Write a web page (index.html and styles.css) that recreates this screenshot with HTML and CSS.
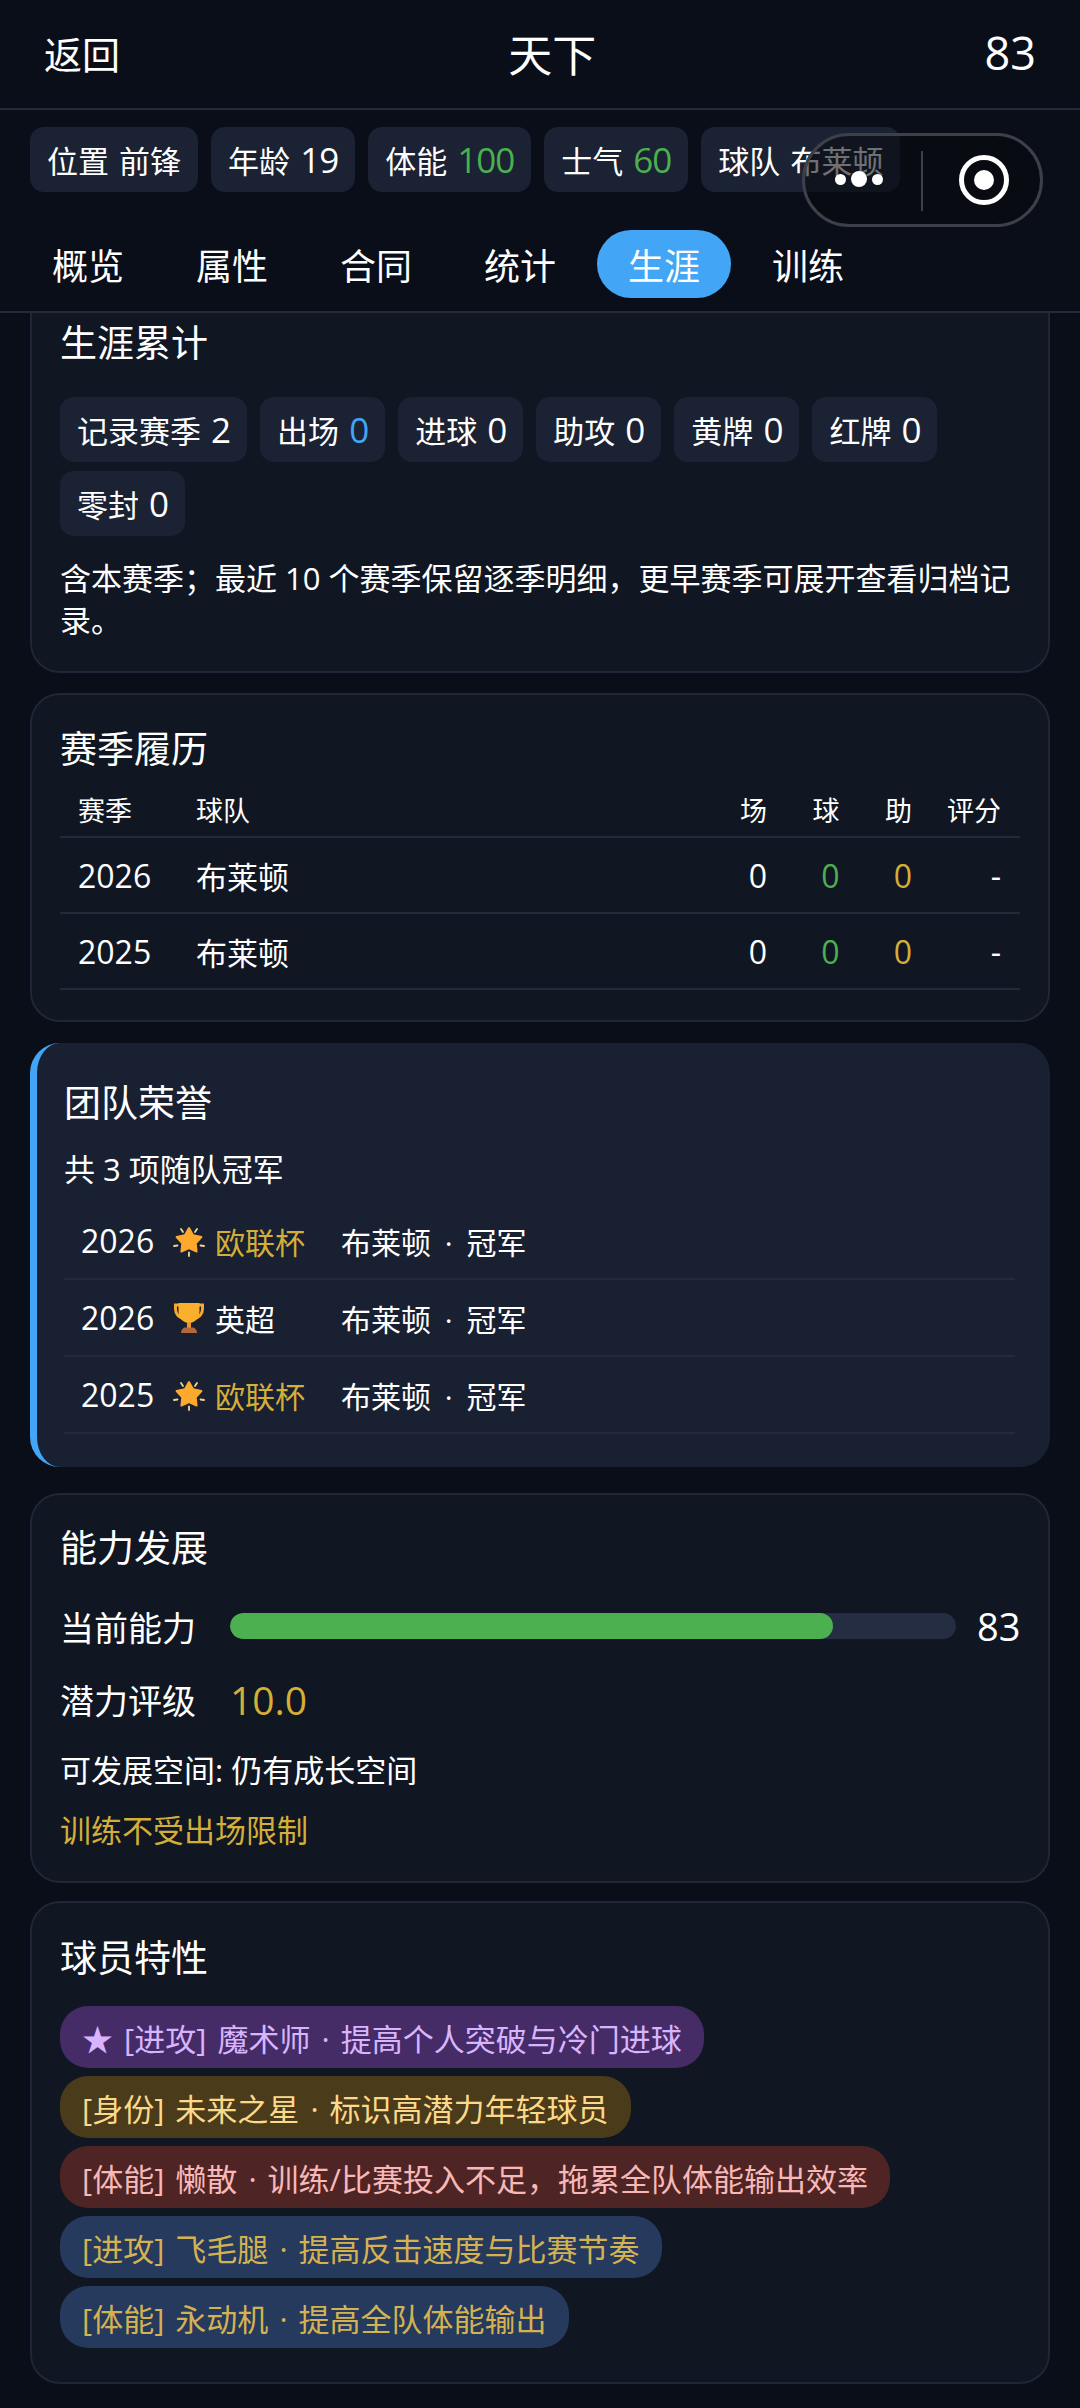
FILE: index.html
```html
<!DOCTYPE html>
<html lang="zh-CN">
  <head>
    <meta charset="UTF-8" />
    <meta name="viewport" content="width=device-width, initial-scale=1.0" />
    <title>天下</title>
    <link rel="stylesheet" href="styles.css">
  </head>
  <body>
    <header class="topbar">
      <div class="nav">
        <span class="nav-side">返回</span>
        <span class="nav-title">天下</span>
        <span class="nav-side nav-num">83</span>
      </div>
      <div class="stat-row">
        <span class="chip">位置 前锋</span>
        <span class="chip">年龄 <b>19</b></span>
        <span class="chip">体能 <b class="green">100</b></span>
        <span class="chip">士气 <b class="green">60</b></span>
        <span class="chip">球队 布莱顿</span>
      </div>
      <nav class="tabs">
        <span class="tab">概览</span>
        <span class="tab">属性</span>
        <span class="tab">合同</span>
        <span class="tab">统计</span>
        <span class="tab active">生涯</span>
        <span class="tab">训练</span>
      </nav>
    </header>

    <div class="capsule">
      <div class="capsule-dots"><i></i><i class="big"></i><i></i></div>
      <div class="capsule-line"></div>
      <svg class="capsule-target" width="50" height="50" viewBox="0 0 50 50">
        <circle cx="25" cy="25" r="22.5" fill="none" stroke="#fff" stroke-width="5" />
        <circle cx="25" cy="25" r="10" fill="#fff" />
      </svg>
    </div>

    <main class="content">
      <section class="card card-first">
        <h2 class="card-title title-career">生涯累计</h2>
        <div class="chip-wrap">
          <span class="chip">记录赛季 <b>2</b></span>
          <span class="chip">出场 <b class="blue">0</b></span>
          <span class="chip">进球 <b>0</b></span>
          <span class="chip">助攻 <b>0</b></span>
          <span class="chip">黄牌 <b>0</b></span>
          <span class="chip">红牌 <b>0</b></span>
          <span class="chip">零封 <b>0</b></span>
        </div>
        <p class="note">含本赛季；最近 10 个赛季保留逐季明细，更早赛季可展开查看归档记录。</p>
      </section>

      <section class="card card-seasons">
        <h2 class="card-title">赛季履历</h2>
        <table class="season-table">
          <thead>
            <tr>
              <th class="col-season">赛季</th>
              <th>球队</th>
              <th class="num col-n">场</th>
              <th class="num col-n">球</th>
              <th class="num col-n">助</th>
              <th class="num col-rate">评分</th>
            </tr>
          </thead>
          <tbody>
            <tr>
              <td>2026</td>
              <td>布莱顿</td>
              <td class="num">0</td>
              <td class="num green">0</td>
              <td class="num gold">0</td>
              <td class="num">-</td>
            </tr>
            <tr>
              <td>2025</td>
              <td>布莱顿</td>
              <td class="num">0</td>
              <td class="num green">0</td>
              <td class="num gold">0</td>
              <td class="num">-</td>
            </tr>
          </tbody>
        </table>
      </section>

      <section class="card honor">
        <h2 class="card-title">团队荣誉</h2>
        <p class="honor-sub">共 3 项随队冠军</p>
        <div class="honor-list">
          <div class="honor-row">
            <span>2026</span>
            <svg class="honor-icon" width="32" height="32" viewBox="0 0 32 32">
              <use href="#glowing-star" />
            </svg>
            <span class="gold">欧联杯</span>
            <span>布莱顿 · 冠军</span>
          </div>
          <div class="honor-row">
            <span>2026</span>
            <svg class="honor-icon" width="32" height="32" viewBox="0 0 32 32">
              <use href="#trophy" />
            </svg>
            <span>英超</span>
            <span>布莱顿 · 冠军</span>
          </div>
          <div class="honor-row">
            <span>2025</span>
            <svg class="honor-icon" width="32" height="32" viewBox="0 0 32 32">
              <use href="#glowing-star" />
            </svg>
            <span class="gold">欧联杯</span>
            <span>布莱顿 · 冠军</span>
          </div>
        </div>
      </section>

      <section class="card card-growth">
        <h2 class="card-title">能力发展</h2>
        <div class="ability-row">
          <span class="ability-label">当前能力</span>
          <div class="bar"><div class="bar-fill" style="width: 83%"></div></div>
          <span class="ability-value">83</span>
        </div>
        <div class="ability-row potential">
          <span class="ability-label">潜力评级</span>
          <span class="potential-value gold">10.0</span>
        </div>
        <p class="growth-line">可发展空间: 仍有成长空间</p>
        <p class="growth-line gold">训练不受出场限制</p>
      </section>

      <section class="card card-traits">
        <h2 class="card-title">球员特性</h2>
        <div class="trait-list">
          <span class="trait trait-purple">★ [进攻] 魔术师 · 提高个人突破与冷门进球</span>
          <span class="trait trait-brown">[身份] 未来之星 · 标识高潜力年轻球员</span>
          <span class="trait trait-red">[体能] 懒散 · 训练/比赛投入不足，拖累全队体能输出效率</span>
          <span class="trait trait-blue">[进攻] 飞毛腿 · 提高反击速度与比赛节奏</span>
          <span class="trait trait-blue">[体能] 永动机 · 提高全队体能输出</span>
        </div>
      </section>
    </main>

    <svg class="defs" width="0" height="0">
      <defs>
        <g id="glowing-star">
          <path d="M16 3l4.100 7.300 8.300 1.700-5.700 6.200 .9 8.300L16 23l-7.600 3.500 .9-8.300L3.600 12l8.300-1.700z" fill="#fca92e" stroke="#fca92e" stroke-width="2" stroke-linejoin="round" />
          <path d="M8 4l2 3M24 4l-2 3M1 21l3.500-.5M31 21l-3.500-.5M16 27.500V31" fill="none" stroke="#f0d890" stroke-width="1.800" stroke-linecap="round" />
        </g>
        <g id="trophy">
          <path d="M7 3H2.500v4c0 5 3.500 9 9 9.500M25 3h4.500v4c0 5-3.500 9-9 9.500" fill="none" stroke="#f6a92c" stroke-width="3" />
          <path d="M5.500 1h21v8c0 7-4.500 12-10.500 12S5.500 16 5.500 9z" fill="#fbb02d" />
          <path d="M14 20h4v6h-4z" fill="#ec9a2b" />
          <path d="M8 31c0-3 2-5.500 4.500-5.500h7c2.500 0 4.500 2.500 4.500 5.500z" fill="#b5663c" />
        </g>
      </defs>
    </svg>
  </body>
</html>
```

FILE: styles.css
```css
* {
  box-sizing: border-box;
}

html,
body {
  margin: 0;
  height: 100%;
}

body {
  width: 1080px;
  height: 2408px;
  overflow: hidden;
  display: flex;
  flex-direction: column;
  position: relative;
  background: #0a0e19;
  color: #fff;
  font-family: "Open Sans", "Noto Sans CJK SC", sans-serif;
  font-weight: 400;
}

h2,
p {
  margin: 0;
  font-weight: inherit;
}

.green {
  color: #4caf50;
}

.blue {
  color: #42a5f5;
}

.gold {
  color: #d4af37;
}

.topbar {
  flex: none;
  height: 313px;
  background: #0a0e19;
  border-bottom: 2px solid #232a3c;
}

.nav {
  height: 110px;
  padding: 0 44px 3px;
  display: flex;
  align-items: center;
  justify-content: space-between;
  border-bottom: 2px solid #232a3c;
}

.nav-side {
  font-size: 38px;
}

.nav-num {
  font-size: 45px;
}

.nav-title {
  font-size: 44px;
}

.stat-row {
  display: flex;
  gap: 13px;
  padding: 17px 30px 0;
}

.chip {
  flex: none;
  height: 65px;
  padding: 0 17px;
  display: inline-flex;
  align-items: center;
  white-space: pre-wrap;
  word-spacing: 2px;
  border-radius: 14px;
  background: #1a2233;
  font-size: 31px;
}

.chip b {
  font-size: 35px;
  font-weight: 400;
  letter-spacing: -1px;
}

.tabs {
  display: flex;
  gap: 10px;
  padding: 38px 21px 0;
}

.tab {
  width: 134px;
  height: 68px;
  display: flex;
  align-items: center;
  justify-content: center;
  border-radius: 34px;
  font-size: 36px;
}

.tab.active {
  background: #42a5f5;
  color: #fff;
}

.capsule {
  position: absolute;
  left: 802px;
  top: 133px;
  width: 241px;
  height: 94px;
  border: 3px solid #3d4049;
  border-radius: 47px;
  background: rgba(8, 10, 16, 0.58);
}

.capsule-dots {
  position: absolute;
  left: 30px;
  top: 35px;
  display: flex;
  align-items: center;
  gap: 5px;
}

.capsule-dots i {
  width: 11px;
  height: 11px;
  border-radius: 50%;
  background: #fff;
}

.capsule-dots i.big {
  width: 16px;
  height: 16px;
}

.capsule-line {
  position: absolute;
  left: 116px;
  top: 15px;
  width: 2px;
  height: 60px;
  background: #3d4049;
}

.capsule-target {
  position: absolute;
  left: 154px;
  top: 19px;
}

.content {
  flex: 1;
  overflow: hidden;
  padding: 0 30px;
}

.card {
  border: 2px solid #1e2638;
  border-radius: 30px;
  background: #101622;
  padding: 30px 28px;
}

.card-first {
  margin-top: -27px;
  padding-bottom: 30px;
}

.card-title {
  font-size: 37px;
  line-height: 50px;
}

.title-career {
  margin-bottom: 29px;
}

.chip-wrap {
  display: flex;
  flex-wrap: wrap;
  gap: 9px 13px;
}

.note {
  margin-top: 21px;
  font-size: 31px;
  line-height: 42px;
}

.card-seasons {
  margin-top: 20px;
  padding-top: 29px;
}

.season-table {
  width: 100%;
  margin-top: 9px;
  border-collapse: collapse;
  table-layout: fixed;
}

.season-table th,
.season-table td {
  padding: 0 0 0 18px;
  text-align: left;
  font-weight: inherit;
  border-bottom: 2px solid #232a3c;
}

.season-table th {
  height: 54px;
  font-size: 27px;
}

.season-table td {
  height: 76px;
  font-size: 32px;
}

.season-table td:nth-child(2) {
  font-size: 31px;
}

.season-table .num {
  padding: 0 19px 0 0;
  text-align: right;
}

.col-season {
  width: 118px;
}

.col-n {
  width: 72.5px;
}

.col-rate {
  width: 89px;
}

.honor {
  margin-top: 21px;
  height: 424px;
  padding: 35px 35px 0 27px;
  border: 0;
  border-left: 7px solid #42a5f5;
  background: #182032;
}

.honor-sub {
  margin-top: 20px;
  font-size: 31px;
  line-height: 42px;
}

.honor-list {
  margin-top: 13px;
}

.honor-row {
  height: 77px;
  padding: 0 0 0 17px;
  display: grid;
  grid-template-columns: 92px 42px 126px 1fr;
  align-items: center;
  border-bottom: 2px solid #232a3c;
  font-size: 30px;
  word-spacing: 6px;
}

.honor-row span:first-child {
  font-size: 32px;
}

.card-growth {
  margin-top: 26px;
  height: 390px;
  padding-top: 28px;
}

.ability-row {
  display: flex;
  align-items: center;
  height: 46px;
  margin-top: 30px;
}

.ability-row.potential {
  margin-top: 27px;
}

.ability-label {
  flex: none;
  width: 170px;
  font-size: 34px;
}

.bar {
  flex: 1;
  height: 26px;
  border-radius: 13px;
  background: #252d43;
  overflow: hidden;
}

.bar-fill {
  height: 100%;
  border-radius: 13px;
  background: #4caf50;
}

.ability-value {
  flex: none;
  width: 43px;
  margin-left: 21px;
  font-size: 38px;
}

.potential-value {
  font-size: 39px;
}

.growth-line {
  font-size: 31px;
  line-height: 42px;
  margin-top: 18px;
}

.ability-row + .growth-line {
  margin-top: 27px;
}

.card-traits {
  margin-top: 18px;
  height: 483px;
}

.trait-list {
  margin-top: 23px;
  display: flex;
  flex-direction: column;
  align-items: flex-start;
  gap: 8px;
}

.trait {
  height: 62px;
  padding: 0 22px;
  display: flex;
  align-items: center;
  border-radius: 28px;
  font-size: 31px;
  word-spacing: 3px;
}

.trait-purple {
  background: #452c66;
  color: #d8b4fe;
}

.trait-brown {
  background: #4a3b1a;
  color: #fcd98a;
}

.trait-red {
  background: #4e2524;
  color: #f9b8b8;
}

.trait-blue {
  background: #253a5c;
  color: #d4b254;
}

.defs {
  position: absolute;
}
```
